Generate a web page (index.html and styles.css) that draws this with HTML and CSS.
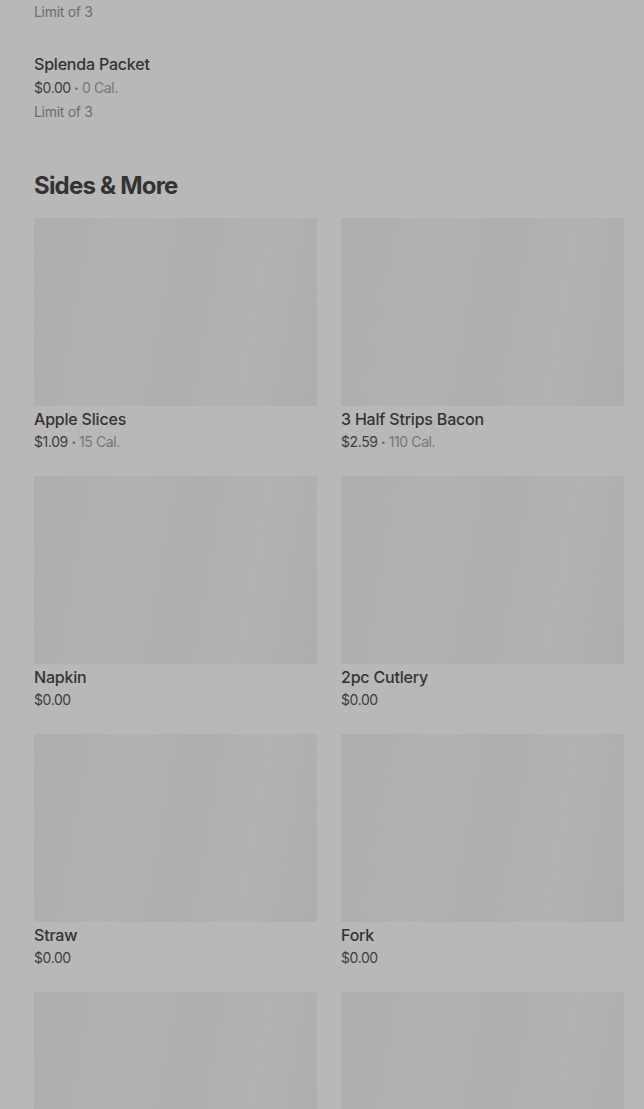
FILE: index.html
```html
<!DOCTYPE html>
<html lang="en">
<head>
<meta charset="utf-8">
<title>Menu</title>
<link rel="stylesheet" href="styles.css">
</head>
<body>
<main class="page">
  <section class="list">
    <div class="item item--tail">
      <div class="meta">Limit of 3</div>
    </div>
    <div class="item">
      <div class="name">Splenda Packet</div>
      <div class="price">$0.00 <span class="dot">•</span> <span class="cal">0 Cal.</span></div>
      <div class="meta">Limit of 3</div>
    </div>
  </section>

  <section class="section">
    <h2 class="heading">Sides &amp; More</h2>
    <div class="grid">
      <div class="card">
        <div class="thumb"></div>
        <div class="card-name">Apple Slices</div>
        <div class="card-price">$1.09 <span class="dot">•</span> <span class="cal">15 Cal.</span></div>
      </div>
      <div class="card">
        <div class="thumb"></div>
        <div class="card-name">3 Half Strips Bacon</div>
        <div class="card-price">$2.59 <span class="dot">•</span> <span class="cal">110 Cal.</span></div>
      </div>
      <div class="card">
        <div class="thumb"></div>
        <div class="card-name">Napkin</div>
        <div class="card-price">$0.00</div>
      </div>
      <div class="card">
        <div class="thumb"></div>
        <div class="card-name">2pc Cutlery</div>
        <div class="card-price">$0.00</div>
      </div>
      <div class="card">
        <div class="thumb"></div>
        <div class="card-name">Straw</div>
        <div class="card-price">$0.00</div>
      </div>
      <div class="card">
        <div class="thumb"></div>
        <div class="card-name">Fork</div>
        <div class="card-price">$0.00</div>
      </div>
      <div class="card">
        <div class="thumb"></div>
      </div>
      <div class="card">
        <div class="thumb"></div>
      </div>
    </div>
  </section>
</main>
</body>
</html>
```

FILE: styles.css
```css
html, body {
  margin: 0;
  padding: 0;
  background: #b8b8b8;
}

body {
  font-family: Inter, "Noto Sans", "Liberation Sans", sans-serif;
  color: #333333;
  overflow: hidden;
  height: 1109px;
}

.page {
  height: 1109px;
  overflow: hidden;
  padding: 0 20px 0 34px;
}

.list {
  display: flex;
  flex-direction: column;
}

.item {
  display: flex;
  flex-direction: column;
  padding: 14px 0;
}

.item--tail {
  padding-top: 0;
}

.name {
  font-size: 16px;
  line-height: 24px;
  font-weight: 500;
  letter-spacing: -0.2px;
  color: #333333;
}

.price {
  height: 24px;
  font-size: 14px;
  line-height: 24px;
  letter-spacing: -0.4px;
  color: #3d3d3d;
}

.dot {
  display: inline-block;
  font-size: 8px;
  line-height: 0;
  vertical-align: 2px;
  color: #6b6b6b;
}

.cal {
  color: #767676;
}

.meta {
  font-size: 14px;
  line-height: 24px;
  letter-spacing: -0.3px;
  color: #6e6e6e;
}

.section {
  margin-top: 32px;
}

.heading {
  margin: 0 0 16px;
  font-size: 24px;
  line-height: 32px;
  font-weight: 700;
  letter-spacing: -0.8px;
  color: #333333;
}

.grid {
  display: grid;
  grid-template-columns: 1fr 1fr;
  column-gap: 24px;
  row-gap: 24px;
}

.card {
  display: flex;
  flex-direction: column;
}

.thumb {
  height: 188px;
  background: linear-gradient(100deg, #aeaeae 0%, #b1b1b1 30%, #afafaf 55%, #b2b2b2 75%, #adadad 100%);
}

.card-name {
  margin-top: 2px;
  font-size: 16px;
  line-height: 22px;
  font-weight: 500;
  letter-spacing: -0.2px;
  color: #333333;
}

.card-price {
  height: 20px;
  margin-top: 2px;
  font-size: 14px;
  line-height: 20px;
  letter-spacing: -0.4px;
  color: #3d3d3d;
}
```
